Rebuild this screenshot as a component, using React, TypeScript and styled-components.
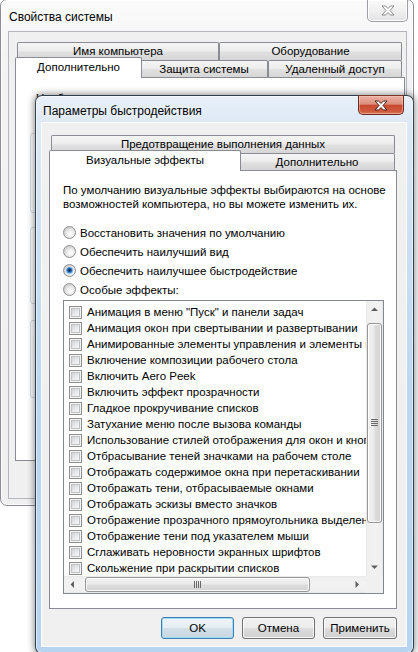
import React from 'react';
import styled, { createGlobalStyle, css } from 'styled-components';

const FONT = `'Segoe UI', 'Liberation Sans', Arial, sans-serif`;

const GlobalStyle = createGlobalStyle`
  * { box-sizing: border-box; }
  html, body { margin: 0; padding: 0; background: #ffffff; }
  body {
    font-family: ${FONT};
    font-size: 11.5px;
    color: #000;
  }
`;

const Desktop = styled.div`
  position: relative;
  width: 418px;
  height: 652px;
  overflow: hidden;
  background: #fff;
`;

// windows sit on the desktop canvas, so they get coordinates
const Window = styled.div<{ $x: number; $y: number; $w: number; $h: number; $active?: boolean }>`
  position: absolute;
  left: ${(p) => p.$x}px;
  top: ${(p) => p.$y}px;
  width: ${(p) => p.$w}px;
  height: ${(p) => p.$h}px;
  display: flex;
  flex-direction: column;
  border-radius: 7px;
  ${(p) =>
    p.$active
      ? css`
          border: 1px solid rgba(24, 36, 52, 0.85);
          background: linear-gradient(180deg, #e8f0f9 0px, #dce8f5 30px, #cadff3 150px, #bad6f0 300px, #b6d3ef 100%);
          box-shadow: 0 0 7px 1px rgba(0, 0, 0, 0.45), inset 0 0 0 1px rgba(255, 255, 255, 0.55);
        `
      : css`
          border: 1px solid #8a8e93;
          background: linear-gradient(180deg, #fbfbfb 0px, #f3f3f3 60px, #efefef 100%);
          box-shadow: inset 0 0 0 1px rgba(255, 255, 255, 0.8);
        `}
`;

const TitleBar = styled.div<{ $h: number }>`
  flex: none;
  height: ${(p) => p.$h}px;
  display: flex;
  align-items: flex-start;
  justify-content: space-between;
`;

const TitleText = styled.span<{ $pt: number; $pl: number }>`
  padding: ${(p) => p.$pt}px 0 0 ${(p) => p.$pl}px;
  font-size: 12px;
  line-height: 16px;
  white-space: nowrap;
  text-shadow: 0 0 6px rgba(255, 255, 255, 0.95);
`;

const CloseButton = styled.div<{ $active?: boolean; $w: number; $h: number; $mt: number; $mr: number }>`
  flex: none;
  width: ${(p) => p.$w}px;
  height: ${(p) => p.$h}px;
  margin: ${(p) => p.$mt}px ${(p) => p.$mr}px 0 0;
  display: flex;
  align-items: center;
  justify-content: center;
  border-radius: 0 0 5px 5px;
  ${(p) =>
    p.$active
      ? css`
          border: 1px solid #6b2b20;
          border-top-color: #7a3328;
          background: linear-gradient(180deg, #eab3a6 0%, #de8e7c 45%, #c9492f 52%, #cf5a3e 85%, #dc7a5c 100%);
          box-shadow: inset 0 0 0 1px rgba(255, 210, 200, 0.45);
        `
      : css`
          border: 1px solid #9c9fa3;
          border-top: none;
          background: linear-gradient(180deg, #fafafa 0%, #f0f0f0 50%, #e2e2e2 100%);
          box-shadow: inset 0 0 0 1px rgba(255, 255, 255, 0.9);
        `}
`;

const XGlyph = ({ fill, stroke }: { fill: string; stroke: string }) => (
  <svg width="14" height="11" viewBox="0 0 14 11">
    <polygon
      points="1,1 4.6,1 7,3.5 9.4,1 13,1 9,5.5 13,10 9.4,10 7,7.5 4.6,10 1,10 5,5.5"
      fill={fill}
      stroke={stroke}
      strokeWidth="1"
      strokeLinejoin="round"
    />
  </svg>
);

const Client = styled.div<{ $m: string; $p: string; $edge: string }>`
  flex: 1;
  display: flex;
  flex-direction: column;
  margin: ${(p) => p.$m};
  padding: ${(p) => p.$p};
  background: #f0f0f0;
  border: 1px solid ${(p) => p.$edge};
  min-height: 0;
`;

const TabStrip = styled.div`
  flex: none;
  display: flex;
  flex-direction: column;
  padding: 0 2px;
`;

const TabRow = styled.div<{ $h: number }>`
  display: flex;
  height: ${(p) => p.$h}px;
`;

const Tab = styled.div<{ $w: number; $selected?: boolean }>`
  flex: none;
  width: ${(p) => p.$w + (p.$selected ? 4 : 0)}px;
  display: flex;
  align-items: center;
  justify-content: center;
  border: 1px solid #898c95;
  border-bottom: none;
  border-radius: 2px 2px 0 0;
  white-space: nowrap;
  line-height: 15px;
  background: linear-gradient(180deg, #f5f5f5 0%, #ededed 45%, #e0e0e0 55%, #d6d6d6 100%);
  ${(p) =>
    p.$selected &&
    css`
      position: relative;
      z-index: 1;
      margin: -3px -2px -1px;
      padding-bottom: 1px;
      background: #fff;
    `}
`;

const TabPanel = styled.div<{ $h: number; $p: string }>`
  flex: none;
  height: ${(p) => p.$h}px;
  border: 1px solid #898c95;
  background: #fff;
  padding: ${(p) => p.$p};
  display: flex;
  flex-direction: column;
  overflow: hidden;
`;

/* back window panel */
const BackNote = styled.div`
  margin-left: 6px;
  line-height: 15px;
  width: 330px;
`;

const GroupBox = styled.div<{ $mt: number; $h: number }>`
  flex: none;
  margin: ${(p) => p.$mt}px 14px 0 0;
  height: ${(p) => p.$h}px;
  border: 1px solid #d5dfe5;
  border-radius: 3px;
  padding: 0 8px;
`;

const GroupTitle = styled.div`
  margin: -8px 0 4px -2px;
  padding: 0 2px;
  width: fit-content;
  background: #fff;
  line-height: 15px;
`;

const GroupText = styled.div`
  line-height: 15px;
  padding-left: 6px;
`;

/* front window panel */
const Intro = styled.div`
  line-height: 14px;
  white-space: nowrap;
`;

const RadioGroup = styled.div`
  margin-top: 12px;
  display: flex;
  flex-direction: column;
`;

const RadioRow = styled.div`
  display: flex;
  align-items: center;
  height: 19px;
  white-space: nowrap;
`;

const RadioCircle = styled.span<{ $checked?: boolean }>`
  flex: none;
  width: 13px;
  height: 13px;
  margin-right: 4px;
  border-radius: 50%;
  border: 1px solid #8e8f8f;
  background: radial-gradient(circle at 60% 62%, #ffffff 0, #f3f3f3 2.5px, #dcdcdc 5.5px, #d2d2d2 6px);
  display: flex;
  align-items: center;
  justify-content: center;
  &::after {
    content: '';
    display: ${(p) => (p.$checked ? 'block' : 'none')};
    width: 7px;
    height: 7px;
    border-radius: 50%;
    background: radial-gradient(circle at 50% 45%, #0c2140 0, #1b4a85 1.4px, #3a85d2 2.5px, #93cbf3 3.5px);
  }
`;

const ListBox = styled.div`
  flex: none;
  margin-top: 1px;
  width: 321px;
  height: 294px;
  border: 1px solid #828790;
  background: #fff;
  display: grid;
  grid-template-columns: 302px 17px;
  grid-template-rows: 275px 17px;
`;

const ListViewport = styled.div`
  overflow: hidden;
  padding: 3px 0 0 5px;
`;

const ListItem = styled.div`
  display: flex;
  align-items: center;
  height: 16px;
  white-space: nowrap;
`;

const CheckBox = styled.span`
  flex: none;
  display: flex;
  width: 13px;
  height: 13px;
  margin-right: 5px;
  padding: 1px;
  border: 1px solid #8e8f8f;
  background: #f4f4f4;
  &::after {
    content: '';
    flex: 1;
    border: 1px solid #bfc3c8;
    background: linear-gradient(135deg, #d0d3d7 0%, #e6e8ea 50%, #f8f8f8 100%);
  }
`;

const VScroll = styled.div`
  display: flex;
  flex-direction: column;
  background: linear-gradient(90deg, #e4e4e4 0, #efefef 1px, #f2f2f2 50%, #efefef calc(100% - 1px), #e4e4e4 100%);
`;

const HScroll = styled.div`
  display: flex;
  background: linear-gradient(180deg, #e4e4e4 0, #efefef 1px, #f2f2f2 50%, #efefef calc(100% - 1px), #e4e4e4 100%);
`;

const ScrollCorner = styled.div`
  background: #f0f0f0;
`;

const ArrowButton = styled.div`
  flex: none;
  width: 17px;
  height: 17px;
  display: flex;
  align-items: center;
  justify-content: center;
`;

const Fill = styled.div`
  flex: 1;
`;

const Thumb = styled.div<{ $vertical?: boolean; $len: number; $start: number }>`
  flex: none;
  display: flex;
  align-items: center;
  justify-content: center;
  border: 1px solid #979797;
  border-radius: 3px;
  box-shadow: inset 0 0 0 1px rgba(255, 255, 255, 0.85);
  ${(p) =>
    p.$vertical
      ? css`
          height: ${p.$len}px;
          margin: ${p.$start}px 1px 0;
          background: linear-gradient(90deg, #f2f2f2 0%, #ebebeb 45%, #dcdcdc 55%, #d3d3d3 100%);
        `
      : css`
          width: ${p.$len}px;
          margin: 1px 0 1px ${p.$start}px;
          background: linear-gradient(180deg, #f2f2f2 0%, #ebebeb 45%, #dcdcdc 55%, #d3d3d3 100%);
        `}
`;

const Arrow = ({ dir }: { dir: 'up' | 'down' | 'left' | 'right' }) => {
  const pts = {
    up: '0,4 3.5,0.5 7,4',
    down: '0,0.5 7,0.5 3.5,4',
    left: '4,0 4,7 0.5,3.5',
    right: '0.5,0 0.5,7 4,3.5',
  }[dir];
  const vertical = dir === 'up' || dir === 'down';
  return (
    <svg width={vertical ? 7 : 5} height={vertical ? 5 : 7} viewBox={vertical ? '0 0 7 5' : '0 0 5 7'}>
      <polygon points={pts} fill="#606060" />
    </svg>
  );
};

const Grip = ({ vertical }: { vertical?: boolean }) => (
  <svg width={vertical ? 7 : 8} height={vertical ? 8 : 7} viewBox={vertical ? '0 0 7 8' : '0 0 8 7'}>
    {[0, 2, 4, 6].map((i) =>
      vertical ? (
        <rect key={i} x="0" y={i} width="7" height="1" fill="#6a6a6a" />
      ) : (
        <rect key={i} x={i} y="0" width="1" height="7" fill="#6a6a6a" />
      ),
    )}
  </svg>
);

const Footer = styled.div<{ $mt: number }>`
  flex: none;
  display: flex;
  justify-content: flex-end;
  gap: 8px;
  margin-top: ${(p) => p.$mt}px;
`;

const PushButton = styled.div<{ $w: number; $h: number; $default?: boolean }>`
  width: ${(p) => p.$w}px;
  height: ${(p) => p.$h}px;
  display: flex;
  align-items: center;
  justify-content: center;
  border-radius: 3px;
  white-space: nowrap;
  border: 1px solid ${(p) => (p.$default ? '#3c7fb1' : '#707070')};
  background: ${(p) =>
    p.$default
      ? 'linear-gradient(180deg, #eef4f8 0%, #e6eef3 50%, #d4e0e8 50%, #c8d6e0 100%)'
      : 'linear-gradient(180deg, #f2f2f2 0%, #ebebeb 50%, #dddddd 50%, #cfcfcf 100%)'};
  box-shadow: inset 0 0 0 1px ${(p) => (p.$default ? '#9fdcf7' : 'rgba(255, 255, 255, 0.8)')};
`;

const effects = [
  'Анимация в меню "Пуск" и панели задач',
  'Анимация окон при свертывании и развертывании',
  'Анимированные элементы управления и элементы внутри окна',
  'Включение композиции рабочего стола',
  'Включить Aero Peek',
  'Включить эффект прозрачности',
  'Гладкое прокручивание списков',
  'Затухание меню после вызова команды',
  'Использование стилей отображения для окон и кнопок',
  'Отбрасывание теней значками на рабочем столе',
  'Отображать содержимое окна при перетаскивании',
  'Отображать тени, отбрасываемые окнами',
  'Отображать эскизы вместо значков',
  'Отображение прозрачного прямоугольника выделения',
  'Отображение тени под указателем мыши',
  'Сглаживать неровности экранных шрифтов',
  'Скольжение при раскрытии списков',
];

const radios = [
  { label: 'Восстановить значения по умолчанию' },
  { label: 'Обеспечить наилучший вид' },
  { label: 'Обеспечить наилучшее быстродействие', checked: true },
  { label: 'Особые эффекты:' },
];

const SystemProperties = () => (
  <Window $x={0} $y={-1} $w={414} $h={507}>
    <TitleBar $h={31}>
      <TitleText $pt={9} $pl={8}>Свойства системы</TitleText>
      <CloseButton $w={41} $h={22} $mt={0} $mr={5}>
        <XGlyph fill="#ffffff" stroke="#8a8a8a" />
      </CloseButton>
    </TitleBar>
    <Client $m="0 6px 6px 7px" $p="10px 1px 0 6px" $edge="#b3b6ba">
      <TabStrip>
        <TabRow $h={18}>
          <Tab $w={202}>Имя компьютера</Tab>
          <Tab $w={183}>Оборудование</Tab>
        </TabRow>
        <TabRow $h={17}>
          <Tab $w={123} $selected>Дополнительно</Tab>
          <Tab $w={128}>Защита системы</Tab>
          <Tab $w={134}>Удаленный доступ</Tab>
        </TabRow>
      </TabStrip>
      <TabPanel $h={384} $p="13px 0 0 14px">
        <BackNote>
          Необходимо иметь права администратора для изменения большинства перечисленных параметров.
        </BackNote>
        <GroupBox $mt={12} $h={80}>
          <GroupTitle>Быстродействие</GroupTitle>
          <GroupText>Визуальные эффекты, использование процессора, оперативной и виртуальной памяти</GroupText>
        </GroupBox>
        <GroupBox $mt={14} $h={77}>
          <GroupTitle>Профили пользователей</GroupTitle>
          <GroupText>Параметры рабочего стола, относящиеся ко входу в систему</GroupText>
        </GroupBox>
        <GroupBox $mt={16} $h={78}>
          <GroupTitle>Загрузка и восстановление</GroupTitle>
          <GroupText>Загрузка и восстановление системы, отладочная информация</GroupText>
        </GroupBox>
      </TabPanel>
      <Footer $mt={8}>
        <PushButton $w={75} $h={23}>ОК</PushButton>
        <PushButton $w={75} $h={23}>Отмена</PushButton>
        <PushButton $w={75} $h={23}>Применить</PushButton>
      </Footer>
    </Client>
  </Window>
);

const PerformanceOptions = () => (
  <Window $x={35} $y={95} $w={379} $h={559} $active>
    <TitleBar $h={26}>
      <TitleText $pt={7} $pl={7}>Параметры быстродействия</TitleText>
      <CloseButton $active $w={46} $h={20} $mt={-1} $mr={9}>
        <XGlyph fill="#ffffff" stroke="#4a2019" />
      </CloseButton>
    </TitleBar>
    <Client $m="0 6px 6px 5px" $p="12px 9px 0 7px" $edge="rgba(255, 255, 255, 0.8)">
      <TabStrip>
        <TabRow $h={18}>
          <Tab $w={344}>Предотвращение выполнения данных</Tab>
        </TabRow>
        <TabRow $h={17}>
          <Tab $w={188} $selected>Визуальные эффекты</Tab>
          <Tab $w={156}>Дополнительно</Tab>
        </TabRow>
      </TabStrip>
      <TabPanel $h={439} $p="12px 13px 0">
        <Intro>
          По умолчанию визуальные эффекты выбираются на основе
          <br />
          возможностей компьютера, но вы можете изменить их.
        </Intro>
        <RadioGroup>
          {radios.map((r) => (
            <RadioRow key={r.label}>
              <RadioCircle $checked={r.checked} />
              {r.label}
            </RadioRow>
          ))}
        </RadioGroup>
        <ListBox>
          <ListViewport>
            {effects.map((e) => (
              <ListItem key={e}>
                <CheckBox />
                {e}
              </ListItem>
            ))}
          </ListViewport>
          <VScroll>
            <ArrowButton>
              <Arrow dir="up" />
            </ArrowButton>
            <Thumb $vertical $len={200} $start={5}>
              <Grip vertical />
            </Thumb>
            <Fill />
            <ArrowButton>
              <Arrow dir="down" />
            </ArrowButton>
          </VScroll>
          <HScroll>
            <ArrowButton>
              <Arrow dir="left" />
            </ArrowButton>
            <Thumb $len={225} $start={4}>
              <Grip />
            </Thumb>
            <Fill />
            <ArrowButton>
              <Arrow dir="right" />
            </ArrowButton>
          </HScroll>
          <ScrollCorner />
        </ListBox>
      </TabPanel>
      <Footer $mt={8}>
        <PushButton $w={73} $h={22} $default>
          OK
        </PushButton>
        <PushButton $w={73} $h={22}>
          Отмена
        </PushButton>
        <PushButton $w={74} $h={22}>
          Применить
        </PushButton>
      </Footer>
    </Client>
  </Window>
);

export default function App() {
  return (
    <>
      <GlobalStyle />
      <Desktop>
        <SystemProperties />
        <PerformanceOptions />
      </Desktop>
    </>
  );
}
